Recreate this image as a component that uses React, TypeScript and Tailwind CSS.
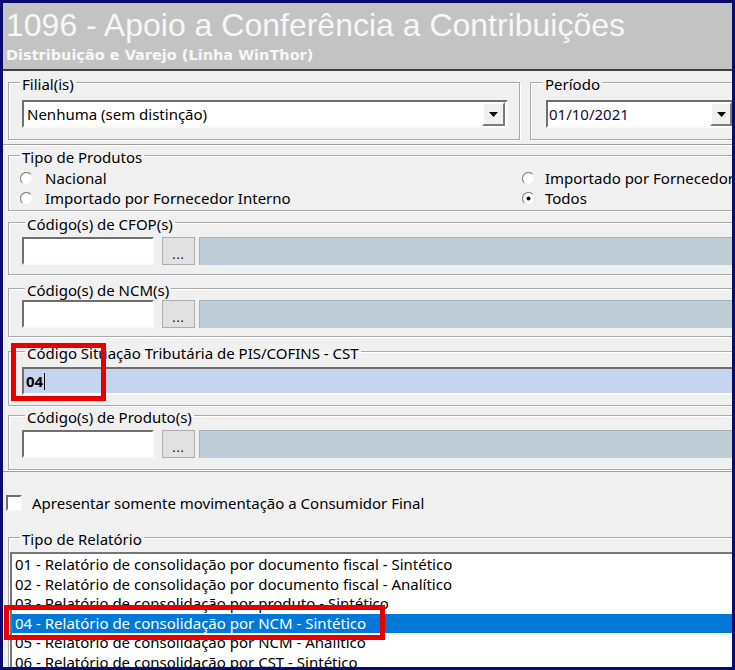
import React from 'react';

// Windows-style sunken edit border
const sunken =
  'border-2 border-[#fbfbfb] border-t-[#6f6f6f] border-l-[#6f6f6f]';
const groupBox =
  'border border-[#a9a9a9] shadow-[inset_1px_1px_0_#fff,1px_1px_0_#fff]';

const Legend: React.FC<{ children: React.ReactNode; className?: string }> = ({
  children,
  className = 'ml-[11px]',
}) => (
  <legend className={`${className} px-[2px] pt-[3px] text-[15px] leading-[16px] whitespace-nowrap`}>
    {children}
  </legend>
);

const Radio: React.FC<{ checked?: boolean }> = ({ checked }) => (
  <svg width="13" height="13" viewBox="0 0 13 13" className="shrink-0">
    <circle cx="6.5" cy="6.5" r="6" fill="#fff" stroke="#ececec" />
    <path d="M2.2 10.8 A6 6 0 0 1 10.8 2.2" fill="none" stroke="#8c8c8c" strokeWidth="1.2" />
    {checked && <circle cx="6.5" cy="6.5" r="2" fill="#000" />}
  </svg>
);

const DropButton: React.FC<{ className?: string }> = ({ className = '' }) => (
  <div
    className={`${className} h-full flex items-center justify-center bg-[#f0f0f0] border-2 border-[#7a7a7a] border-t-[#fff] border-l-[#fff]`}
  >
    <svg width="9" height="5" viewBox="0 0 9 5">
      <path d="M0 0 H9 L4.5 5 Z" fill="#000" />
    </svg>
  </div>
);

const CodeRow: React.FC = () => (
  <div className="flex h-[28px]">
    <div className={`w-[132px] h-full bg-white ${sunken}`} />
    <div className="ml-[8px] w-[33px] h-full bg-[#e1e1e1] border border-[#adadad] flex items-end justify-center pb-[4px] text-[12px] leading-[10px] tracking-[1px]">
      ...
    </div>
    <div className="ml-[4px] flex-1 h-full bg-[#bfcdd9] border-t border-l border-[#a5b2bd]" />
  </div>
);

const reports = [
  '01 - Relatório de consolidação por documento fiscal - Sintético',
  '02 - Relatório de consolidação por documento fiscal - Analítico',
  '03 - Relatório de consolidação por produto - Sintético',
  '04 - Relatório de consolidação por NCM - Sintético',
  '05 - Relatório de consolidação por NCM - Analítico',
  '06 - Relatório de consolidação por CST - Sintético',
];

export default function App() {
  return (
    <div className="relative w-[735px] h-[670px] overflow-hidden bg-[#0b0b6e] pl-[3px] pt-[3px]">
      <div className="w-[729px] h-[664px] overflow-hidden bg-[#f0f0f0] text-black font-['Noto_Sans',sans-serif] text-[15px]">
        {/* Title bar */}
        <div className="h-[68px] bg-[#c3c3c3] border-b-2 border-[#3e3e3e] px-[3px] pt-[6px] text-[#f7f7f7] whitespace-nowrap">
          <div className="font-['Liberation_Sans',Arial,sans-serif] text-[32px] leading-[32px]">
            1096 - Apoio a Conferência a Contribuições
          </div>
          <div className="mt-[6px] font-['DejaVu_Sans',sans-serif] font-bold text-[14.5px] leading-[16px]">
            Distribuição e Varejo (Linha WinThor)
          </div>
        </div>

        <div className="w-[800px]">
          {/* Filial / Período */}
          <div className="flex pt-[2px] pb-[4px] border-b border-[#a0a0a0]">
            <fieldset className={`ml-[5px] w-[512px] ${groupBox}`}>
              <Legend>Filial(is)</Legend>
              <div className="pl-[13px] pt-[8px] pb-[11px]">
                <div className={`w-[486px] h-[28px] bg-white flex items-center ${sunken}`}>
                  <span className="flex-1 pl-[3px] leading-[16px]">Nenhuma (sem distinção)</span>
                  <DropButton className="w-[23px] mr-[1px]" />
                </div>
              </div>
            </fieldset>
            <fieldset className={`ml-[10px] w-[260px] ${groupBox}`}>
              <Legend className="ml-[12px]">Período</Legend>
              <div className="pl-[15px] pt-[8px] pb-[11px]">
                <div className={`w-[190px] h-[28px] bg-white flex items-center ${sunken}`}>
                  <span className="flex-1 pl-[1px] leading-[16px] text-[#1a0a3a]">01/10/2021</span>
                  <DropButton className="w-[22px] mr-[2px]" />
                </div>
              </div>
            </fieldset>
          </div>

          {/* Filters */}
          <div className="border-t border-white pb-[1px] border-b border-b-[#a0a0a0]">
            <fieldset className={`ml-[5px] w-[780px] ${groupBox}`}>
              <Legend>Tipo de Produtos</Legend>
              <div className="pl-[11px] pt-[3px] pb-[2px]">
                <div className="flex h-[20px] items-center">
                  <div className="w-[502px] flex items-center gap-[12px]">
                    <Radio />
                    <span className="leading-[16px]">Nacional</span>
                  </div>
                  <div className="flex items-center gap-[10px] whitespace-nowrap">
                    <Radio />
                    <span className="leading-[16px]">Importado por Fornecedor Externo</span>
                  </div>
                </div>
                <div className="flex h-[20px] items-center">
                  <div className="w-[502px] flex items-center gap-[12px]">
                    <Radio />
                    <span className="leading-[16px]">Importado por Fornecedor Interno</span>
                  </div>
                  <div className="flex items-center gap-[10px]">
                    <Radio checked />
                    <span className="leading-[16px]">Todos</span>
                  </div>
                </div>
              </div>
            </fieldset>

            <fieldset className={`mt-[2px] ml-[5px] w-[780px] ${groupBox}`}>
              <Legend className="ml-[16px]">Código(s) de CFOP(s)</Legend>
              <div className="pl-[13px] pt-[5px] pb-[9px]">
                <CodeRow />
              </div>
            </fieldset>

            <fieldset className={`mt-[4px] ml-[5px] w-[780px] ${groupBox}`}>
              <Legend className="ml-[16px]">Código(s) de NCM(s)</Legend>
              <div className="pl-[13px] pt-[2px] pb-[8px]">
                <CodeRow />
              </div>
            </fieldset>

            <fieldset className={`mt-[5px] ml-[5px] w-[780px] ${groupBox}`}>
              <Legend className="ml-[16px]">Código Situação Tributária de PIS/COFINS - CST</Legend>
              <div className="pl-[13px] pt-[6px] pb-[10px]">
                <div className={`h-[28px] bg-[#c5d5ef] flex items-center pl-[2px] ${sunken}`}>
                  <span className="font-bold leading-[16px]">04</span>
                  <span className="ml-[1px] w-px h-[17px] bg-black" />
                </div>
              </div>
            </fieldset>

            <fieldset className={`ml-[5px] w-[780px] ${groupBox}`}>
              <Legend className="ml-[16px]">Código(s) de Produto(s)</Legend>
              <div className="pl-[13px] pt-[5px] pb-[11px]">
                <CodeRow />
              </div>
            </fieldset>
          </div>

          {/* Consumer-only option */}
          <div className="mt-[23px] ml-[3px] flex items-center h-[16px]">
            <div className={`w-[16px] h-[16px] bg-white ${sunken}`} />
            <span className="ml-[10px] leading-[16px]">
              Apresentar somente movimentação a Consumidor Final
            </span>
          </div>

          {/* Report type list */}
          <fieldset className={`mt-[17px] ml-[5px] w-[780px] ${groupBox}`}>
            <Legend>Tipo de Relatório</Legend>
            <div className="pt-[5px] pl-[1px]">
              <div className="bg-white border-t-2 border-l-2 border-[#767676] pt-px">
                {reports.map((r, i) => (
                  <div
                    key={r}
                    className={
                      i === 3
                        ? 'h-[19.5px] leading-[19.5px] pl-[3px] whitespace-nowrap bg-[#0078d7] text-white'
                        : 'h-[19.5px] leading-[19.5px] pl-[3px] whitespace-nowrap'
                    }
                  >
                    {r}
                  </div>
                ))}
              </div>
            </div>
          </fieldset>
        </div>
      </div>

      {/* Highlight boxes */}
      <div className="absolute left-[11px] top-[343px] w-[95px] h-[58px] border-[5px] border-[#e60000]" />
      <div className="absolute left-[4px] top-[605px] w-[381px] h-[35px] border-[5px] border-[#e60000]" />
    </div>
  );
}
